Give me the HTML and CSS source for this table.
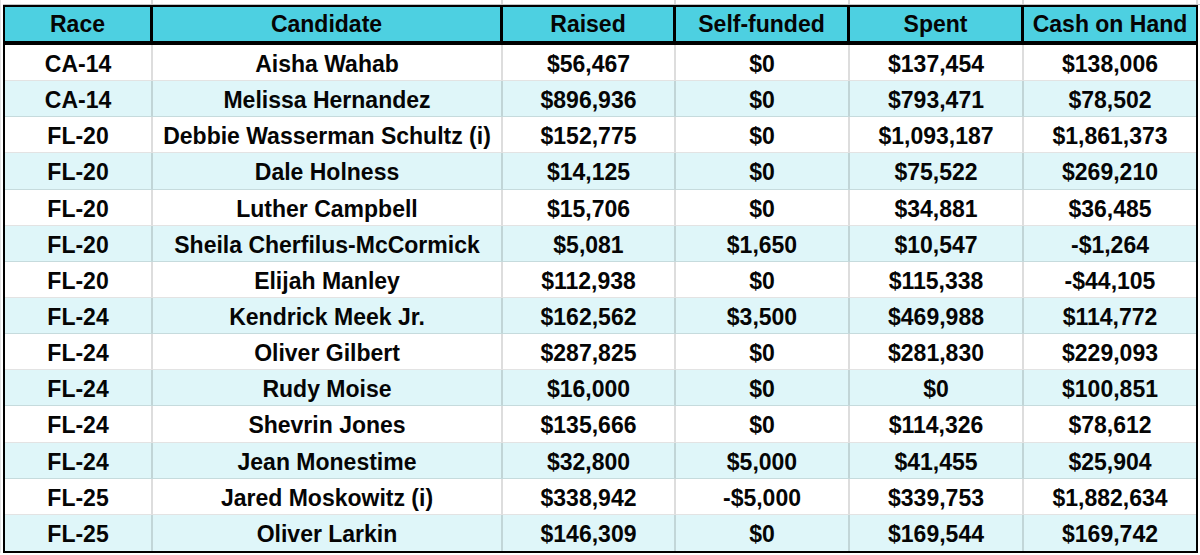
FILE: index.html
```html
<!DOCTYPE html>
<html>
<head>
<meta charset="utf-8">
<link rel="stylesheet" href="styles.css">
</head>
<body>
<div class="sheet">
  <div class="strip">
    <div class="sc"></div><div class="sc"></div><div class="sc"></div><div class="sc"></div><div class="sc"></div><div class="sc"></div>
  </div>
  <div class="table">
    <div class="row head">
      <div class="c">Race</div><div class="c">Candidate</div><div class="c">Raised</div><div class="c">Self-funded</div><div class="c">Spent</div><div class="c">Cash on Hand</div>
    </div>
    <div class="row"><div class="c">CA-14</div><div class="c">Aisha Wahab</div><div class="c">$56,467</div><div class="c">$0</div><div class="c">$137,454</div><div class="c">$138,006</div></div>
    <div class="row alt"><div class="c">CA-14</div><div class="c">Melissa Hernandez</div><div class="c">$896,936</div><div class="c">$0</div><div class="c">$793,471</div><div class="c">$78,502</div></div>
    <div class="row"><div class="c">FL-20</div><div class="c">Debbie Wasserman Schultz (i)</div><div class="c">$152,775</div><div class="c">$0</div><div class="c">$1,093,187</div><div class="c">$1,861,373</div></div>
    <div class="row alt"><div class="c">FL-20</div><div class="c">Dale Holness</div><div class="c">$14,125</div><div class="c">$0</div><div class="c">$75,522</div><div class="c">$269,210</div></div>
    <div class="row"><div class="c">FL-20</div><div class="c">Luther Campbell</div><div class="c">$15,706</div><div class="c">$0</div><div class="c">$34,881</div><div class="c">$36,485</div></div>
    <div class="row alt"><div class="c">FL-20</div><div class="c">Sheila Cherfilus-McCormick</div><div class="c">$5,081</div><div class="c">$1,650</div><div class="c">$10,547</div><div class="c">-$1,264</div></div>
    <div class="row"><div class="c">FL-20</div><div class="c">Elijah Manley</div><div class="c">$112,938</div><div class="c">$0</div><div class="c">$115,338</div><div class="c">-$44,105</div></div>
    <div class="row alt"><div class="c">FL-24</div><div class="c">Kendrick Meek Jr.</div><div class="c">$162,562</div><div class="c">$3,500</div><div class="c">$469,988</div><div class="c">$114,772</div></div>
    <div class="row"><div class="c">FL-24</div><div class="c">Oliver Gilbert</div><div class="c">$287,825</div><div class="c">$0</div><div class="c">$281,830</div><div class="c">$229,093</div></div>
    <div class="row alt"><div class="c">FL-24</div><div class="c">Rudy Moise</div><div class="c">$16,000</div><div class="c">$0</div><div class="c">$0</div><div class="c">$100,851</div></div>
    <div class="row"><div class="c">FL-24</div><div class="c">Shevrin Jones</div><div class="c">$135,666</div><div class="c">$0</div><div class="c">$114,326</div><div class="c">$78,612</div></div>
    <div class="row alt"><div class="c">FL-24</div><div class="c">Jean Monestime</div><div class="c">$32,800</div><div class="c">$5,000</div><div class="c">$41,455</div><div class="c">$25,904</div></div>
    <div class="row"><div class="c">FL-25</div><div class="c">Jared Moskowitz (i)</div><div class="c">$338,942</div><div class="c">-$5,000</div><div class="c">$339,753</div><div class="c">$1,882,634</div></div>
    <div class="row alt last"><div class="c">FL-25</div><div class="c">Oliver Larkin</div><div class="c">$146,309</div><div class="c">$0</div><div class="c">$169,544</div><div class="c">$169,742</div></div>
  </div>
</div>
</body>
</html>
```

FILE: styles.css
```css
* { box-sizing: border-box; }
html, body { margin: 0; padding: 0; background: #ffffff; }
body {
  width: 1200px;
  height: 555px;
  overflow: hidden;
  font-family: "Liberation Sans", Arial, sans-serif;
}
.sheet {
  padding-left: 2px;
  width: 1200px;
  border-left: 1px solid #e3e3e3;
}
.strip {
  display: grid;
  grid-template-columns: 150px 350px 173px 174px 174px 174px;
  height: 5px;
  border-bottom: 1px solid #c4c4c4;
}
.sc { border-right: 2px solid #d9d9d9; }
.table {
  width: 1195px;
  border: 2px solid #000;
}
.row {
  display: grid;
  grid-template-columns: 148px 350px 173px 174px 174px 172px;
  height: 36.15px;
  background: #ffffff;
}
.row.alt { background: #dff6f9; }
.c {
  display: flex;
  align-items: center;
  justify-content: center;
  padding-top: 4px;
  font-weight: bold;
  font-size: 23px;
  color: #050505;
  border-right: 2px solid rgba(0, 0, 0, 0.13);
  border-bottom: 1px solid rgba(0, 0, 0, 0.11);
  white-space: nowrap;
}
.c:last-child { border-right: none; }
.row.last .c { border-bottom: none; }
.row.head {
  height: 38px;
  background: #4dd0e1;
}
.row.head .c {
  border-right: 3px solid #000;
  border-bottom: 4px solid #000;
  padding-top: 0;
}
.row.head .c:last-child { border-right: none; }
```
